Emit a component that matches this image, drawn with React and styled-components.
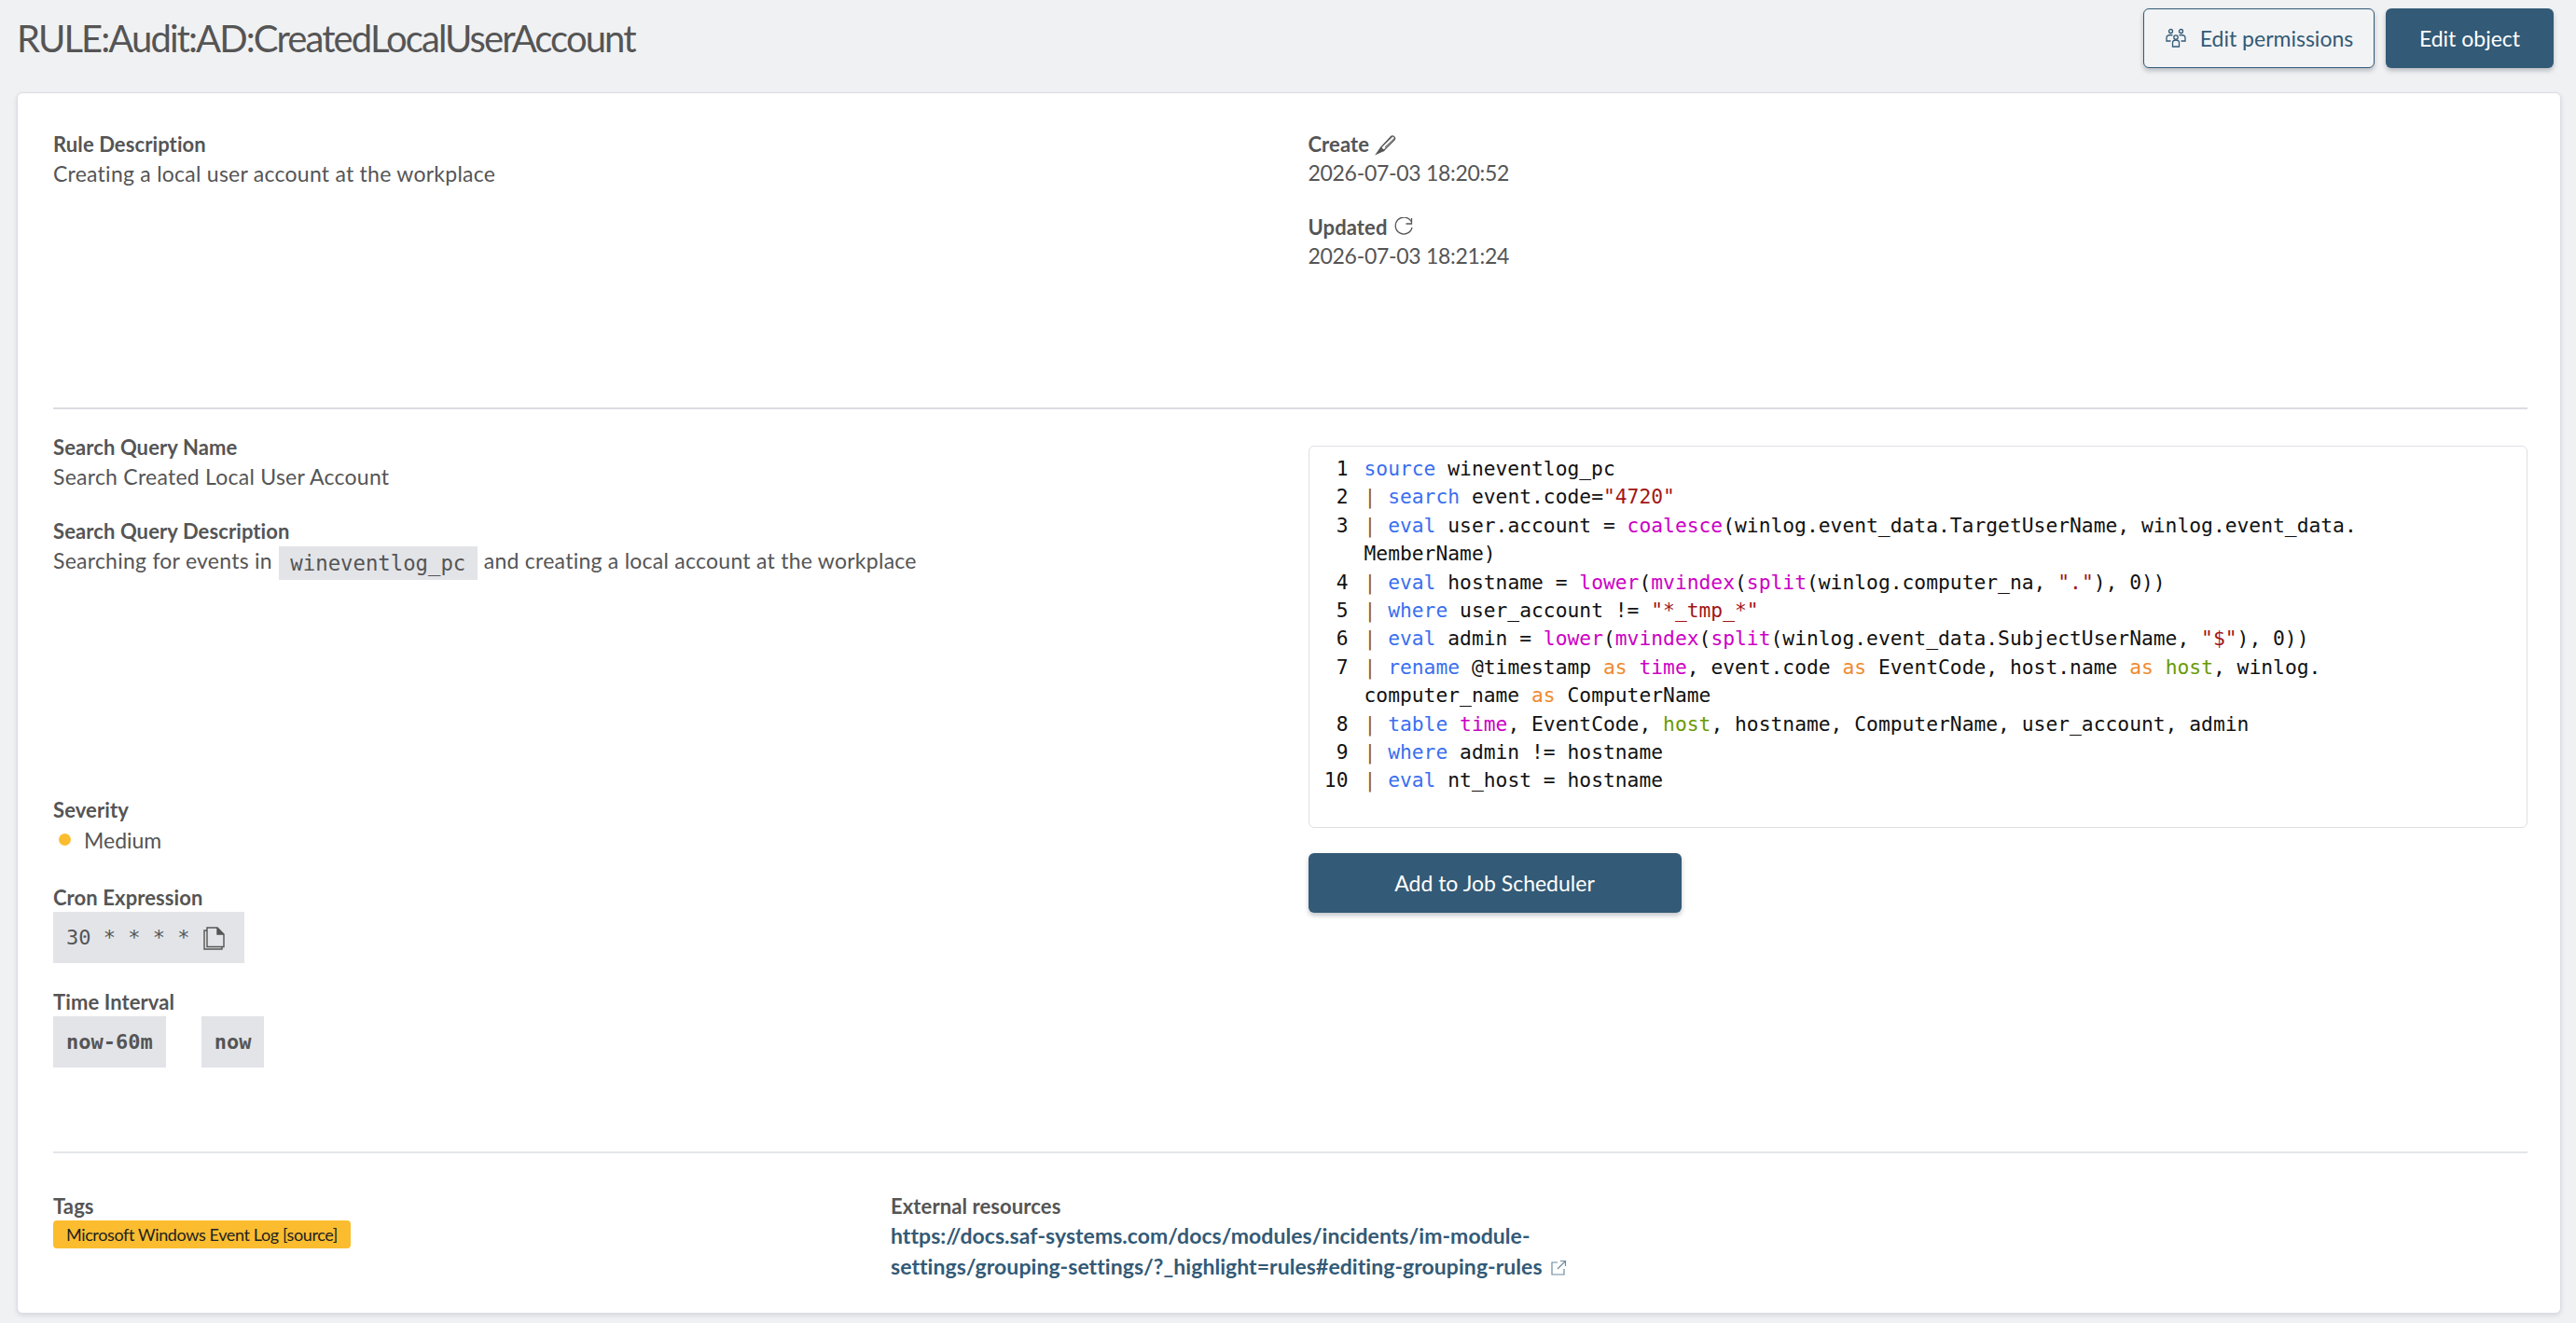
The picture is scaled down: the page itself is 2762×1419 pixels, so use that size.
import React from "react";
import styled, { createGlobalStyle } from "styled-components";

const Global = createGlobalStyle`
  html, body { margin: 0; padding: 0; background: #f0f1f3; }
  body { font-family: "Lato", "Noto Sans", sans-serif; color: #555; }
  * { box-sizing: border-box; }
`;

const sans = `"Lato", "Noto Sans", sans-serif`;
const mono = `"DejaVu Sans Mono", "Liberation Mono", monospace`;

const Page = styled.div`
  width: 2762px;
  height: 1419px;
  padding: 0 16px 0 18px;
  overflow: hidden;
`;
const Header = styled.header`
  height: 99px;
  display: flex;
  align-items: flex-start;
  justify-content: space-between;
  padding: 9px 8px 0 0;
`;
const Title = styled.h1`
  margin: 0;
  height: 64px;
  line-height: 64px;
  font-size: 40px;
  font-weight: 400;
  letter-spacing: -1.92px;
  color: #555;
`;
const Actions = styled.div`
  display: flex;
  gap: 12px;
`;
const Button = styled.button`
  height: 64px;
  width: ${(p) => p.$w}px;
  display: inline-flex;
  align-items: center;
  justify-content: center;
  gap: 14px;
  border-radius: 6px;
  font-family: ${sans};
  font-size: 23px;
  font-weight: 400;
  color: ${(p) => (p.$outline ? "#335a76" : "#fff")};
  background: ${(p) => (p.$outline ? "#f2f3f5" : "#335a76")};
  border: ${(p) => (p.$outline ? "1.5px solid #335a76" : "none")};
  box-shadow: 0 3px 5px rgba(40, 50, 70, 0.28);
`;
const Card = styled.main`
  height: 1310px;
  background: #fff;
  border: 1px solid #dcdde2;
  border-radius: 6px;
  box-shadow: 0 2px 5px rgba(60, 65, 90, 0.14);
  padding: 39px 35px 0 38px;
`;
const TopSection = styled.section`
  display: grid;
  grid-template-columns: 1fr 1fr;
  column-gap: 38px;
  height: 298px;
`;
const MidSection = styled.section`
  display: grid;
  grid-template-columns: 1fr 1fr;
  column-gap: 38px;
  padding: 25px 0 90px;
  border-top: 2px solid #dcdde2;
  border-bottom: 2px solid #e4e5e9;
`;
const LeftColumn = styled.div`
  display: flex;
  flex-direction: column;
  justify-content: space-between;
  height: 681px;
`;
const Field = styled.div`
  margin-bottom: ${(p) => p.$mb ?? 26}px;
  &:last-child { margin-bottom: 0; }
`;
const Label = styled.div`
  display: flex;
  align-items: center;
  gap: 6px;
  height: 31px;
  font-size: 22px;
  font-weight: 700;
  letter-spacing: 0.1px;
  color: #555;
`;
const Value = styled.div`
  min-height: 31px;
  line-height: ${(p) => p.$lh ?? 33}px;
  font-size: 23px;
  letter-spacing: ${(p) => p.$ls ?? 0.25}px;
  color: #555;
`;
const InlineCode = styled.code`
  display: inline-block;
  height: 36px;
  line-height: 36px;
  padding: 0 12.5px;
  margin: 0 7px;
  background: #e3e4e8;
  font-family: ${mono};
  font-size: 22.300px;
  letter-spacing: 0;
  color: #555;
  vertical-align: middle;
`;
const SeverityRow = styled.div`
  display: flex;
  align-items: center;
  gap: 14px;
  height: 33px;
  padding-left: 6px;
  font-size: 23px;
  color: #555;
`;
const Dot = styled.span`
  width: 13px;
  height: 13px;
  border-radius: 50%;
  background: #fbbd2f;
`;
const Pills = styled.div`
  display: flex;
  gap: 38px;
`;
const Pill = styled.div`
  display: inline-flex;
  align-items: center;
  gap: 14px;
  height: 55px;
  padding: 0 ${(p) => (p.$icon ? 21 : 14)}px 0 14px;
  background: #e3e4e8;
  font-family: ${mono};
  font-size: 22px;
  font-weight: ${(p) => (p.$bold ? 700 : 400)};
  color: #555;
`;
const RightColumn = styled.div`
  padding-top: 14px;
`;
const CodeBox = styled.div`
  height: 410px;
  padding: 9px 16px 0;
  border: 1px solid #dfe0e4;
  border-radius: 6px;
  font-family: ${mono};
  font-size: 21.300px;
  line-height: 30.400px;
  color: #111;
`;
const CodeLine = styled.div`
  display: grid;
  grid-template-columns: 26px 1fr;
  column-gap: 17px;
  white-space: pre-wrap;
`;
const LineNo = styled.span`
  text-align: right;
  color: #111;
`;
const Tok = styled.span`
  color: ${(p) => p.$c};
`;
const SchedulerRow = styled.div`
  margin-top: 27px;
`;
const Footer = styled.section`
  display: grid;
  grid-template-columns: 898px 1fr;
  padding-top: 41px;
`;
const Tag = styled.span`
  display: inline-block;
  height: 30px;
  line-height: 30px;
  padding: 0 14px;
  background: #fbbd2f;
  border-radius: 4px;
  font-size: 18px;
  letter-spacing: -0.38px;
  color: #222;
`;
const ResourceLink = styled.a`
  display: block;
  max-width: 740px;
  line-height: 33px;
  font-size: 23px;
  font-weight: 700;
  letter-spacing: 0.05px;
  color: #335a76;
  text-decoration: none;
`;

const PeopleIcon = () => (
  <svg width="24" height="24" viewBox="0 0 24 24" fill="none" stroke="#335a76" strokeWidth="1.3">
    <circle cx="6.500" cy="4.500" r="2" />
    <circle cx="17.500" cy="4.500" r="2" />
    <circle cx="12" cy="11" r="2.200" />
    <path d="M8.500 20v-3c0-2 1.500-3 3.500-3s3.500 1 3.500 3v4h-7z" />
    <path d="M6.500 15H2v-3.500C2 9.500 4 8.500 6.500 8.500c.8 0 1.500.1 2 .4M17.500 15H22v-3.500c0-2-2-3-4.500-3-.8 0-1.500.1-2 .4" />
  </svg>
);
const PencilIcon = () => (
  <svg width="24" height="24" viewBox="0 0 24 24" fill="none" stroke="#555" strokeWidth="1.3">
    <path d="M6.500 15.500 17.500 3.500a2 2 0 0 1 3 0l.5.5a2 2 0 0 1 0 3L9.500 18.500z" />
    <path d="M9 13 19 3.500M11 15 21 5.500" strokeWidth="1" />
    <path d="M6.500 15.500 9.500 18.500 2 22z" fill="#555" />
  </svg>
);
const RefreshIcon = () => (
  <svg width="22" height="22" viewBox="0 0 22 22" fill="none" stroke="#555" strokeWidth="1.3">
    <path d="M19 4.500A9 9 0 1 0 20 11" />
    <path d="M19.500 1v6h-6" />
  </svg>
);
const CopyIcon = () => (
  <svg width="24" height="26" viewBox="0 0 24 26" fill="none" stroke="#555" strokeWidth="1.4">
    <path d="M5 2h11l7 7v13.500H5z" fill="#e3e4e8" />
    <path d="M16 2v7h7" fill="#555" />
    <path d="M5 5H2v20h19v-2.500" />
  </svg>
);
const ExternalIcon = () => (
  <svg width="18" height="18" viewBox="0 0 18 18" fill="none" stroke="#6c8aa0" strokeWidth="1.2" style={{ verticalAlign: "-2px", marginLeft: 8 }}>
    <path d="M8 3H2v13h13v-6" />
    <path d="M8 10 16 2M11 1.500h5.500V7" />
  </svg>
);

const K = "#3a6ff0";
const F = "#cc00c4";
const A = "#f08a2e";
const S = "#a31515";
const H = "#6a9a00";
const P = "#9c5a00";

const lines = [
  [[K, "source"], [0, " wineventlog_pc"]],
  [[P, "| "], [K, "search"], [0, " event.code="], [S, '"4720"']],
  [[P, "| "], [K, "eval"], [0, " user.account = "], [F, "coalesce"], [0, "(winlog.event_data.TargetUserName, winlog.event_data.\nMemberName)"]],
  [[P, "| "], [K, "eval"], [0, " hostname = "], [F, "lower"], [0, "("], [F, "mvindex"], [0, "("], [F, "split"], [0, "(winlog.computer_na, "], [S, '"."'], [0, "), 0))"]],
  [[P, "| "], [K, "where"], [0, " user_account != "], [S, '"*_tmp_*"']],
  [[P, "| "], [K, "eval"], [0, " admin = "], [F, "lower"], [0, "("], [F, "mvindex"], [0, "("], [F, "split"], [0, "(winlog.event_data.SubjectUserName, "], [S, '"$"'], [0, "), 0))"]],
  [[P, "| "], [K, "rename"], [0, " @timestamp "], [A, "as"], [0, " "], [F, "time"], [0, ", event.code "], [A, "as"], [0, " EventCode, host.name "], [A, "as"], [0, " "], [H, "host"], [0, ", winlog.\ncomputer_name "], [A, "as"], [0, " ComputerName"]],
  [[P, "| "], [K, "table"], [0, " "], [F, "time"], [0, ", EventCode, "], [H, "host"], [0, ", hostname, ComputerName, user_account, admin"]],
  [[P, "| "], [K, "where"], [0, " admin != hostname"]],
  [[P, "| "], [K, "eval"], [0, " nt_host = hostname"]],
];

export default function App() {
  return (
    <Page>
      <Global />
      <Header>
        <Title>RULE:Audit:AD:CreatedLocalUserAccount</Title>
        <Actions>
          <Button $outline $w={248}>
            <PeopleIcon />
            Edit permissions
          </Button>
          <Button $w={180}>Edit object</Button>
        </Actions>
      </Header>
      <Card>
        <TopSection>
          <div>
            <Field>
              <Label>Rule Description</Label>
              <Value>Creating a local user account at the workplace</Value>
            </Field>
          </div>
          <div>
            <Field $mb={27}>
              <Label>
                Create <PencilIcon />
              </Label>
              <Value $ls={-0.3} $lh={31}>2026-07-03 18:20:52</Value>
            </Field>
            <Field>
              <Label>
                Updated <RefreshIcon />
              </Label>
              <Value $ls={-0.3} $lh={31}>2026-07-03 18:21:24</Value>
            </Field>
          </div>
        </TopSection>
        <MidSection>
          <LeftColumn>
            <div>
              <Field $mb={26}>
                <Label>Search Query Name</Label>
                <Value>Search Created Local User Account</Value>
              </Field>
              <Field>
                <Label>Search Query Description</Label>
                <Value>
                  Searching for events in<InlineCode>wineventlog_pc</InlineCode>and creating a local account at the workplace
                </Value>
              </Field>
            </div>
            <div>
              <Field $mb={30}>
                <Label>Severity</Label>
                <SeverityRow>
                  <Dot />
                  Medium
                </SeverityRow>
              </Field>
              <Field $mb={26}>
                <Label>Cron Expression</Label>
                <Pill $icon>
                  30 * * * * <CopyIcon />
                </Pill>
              </Field>
              <Field>
                <Label>Time Interval</Label>
                <Pills>
                  <Pill $bold>now-60m</Pill>
                  <Pill $bold>now</Pill>
                </Pills>
              </Field>
            </div>
          </LeftColumn>
          <RightColumn>
            <CodeBox>
              {lines.map((toks, i) => (
                <CodeLine key={i}>
                  <LineNo>{i + 1}</LineNo>
                  <span>
                    {toks.map(([c, t], j) =>
                      c ? (
                        <Tok key={j} $c={c}>
                          {t}
                        </Tok>
                      ) : (
                        t
                      )
                    )}
                  </span>
                </CodeLine>
              ))}
            </CodeBox>
            <SchedulerRow>
              <Button $w={400}>Add to Job Scheduler</Button>
            </SchedulerRow>
          </RightColumn>
        </MidSection>
        <Footer>
          <div>
            <Label>Tags</Label>
            <Tag>Microsoft Windows Event Log [source]</Tag>
          </div>
          <div>
            <Label>External resources</Label>
            <ResourceLink href="#">
              https://docs.saf-systems.com/docs/modules/incidents/im-module-settings/grouping-settings/?_highlight=rules#editing-grouping-rules
              <ExternalIcon />
            </ResourceLink>
          </div>
        </Footer>
      </Card>
    </Page>
  );
}
